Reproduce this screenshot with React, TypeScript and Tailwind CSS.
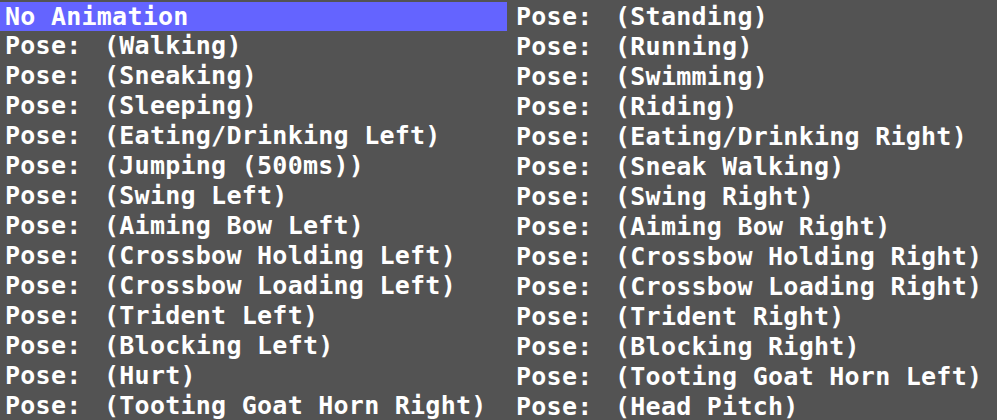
const leftPoses = [
  'Walking',
  'Sneaking',
  'Sleeping',
  'Eating/Drinking Left',
  'Jumping (500ms)',
  'Swing Left',
  'Aiming Bow Left',
  'Crossbow Holding Left',
  'Crossbow Loading Left',
  'Trident Left',
  'Blocking Left',
  'Hurt',
  'Tooting Goat Horn Right',
];

const rightPoses = [
  'Standing',
  'Running',
  'Swimming',
  'Riding',
  'Eating/Drinking Right',
  'Sneak Walking',
  'Swing Right',
  'Aiming Bow Right',
  'Crossbow Holding Right',
  'Crossbow Loading Right',
  'Trident Right',
  'Blocking Right',
  'Tooting Goat Horn Left',
  'Head Pitch',
];

const PoseRow = ({ name }: { name: string }) => (
  <div className="flex h-[30px] items-start pl-[5px] leading-[30px] whitespace-nowrap">
    <span className="w-[99px] shrink-0">Pose:</span>
    <span>({name})</span>
  </div>
);

export default function App() {
  return (
    <div
      className="flex h-[420px] w-[997px] overflow-hidden bg-[#535353] pt-[2px] text-[25px] font-bold tracking-[0.25px] text-white"
      style={{ fontFamily: '"DejaVu Sans Mono", monospace' }}
    >
      <div className="flex w-[511px] shrink-0 flex-col">
        <div className="h-[30px]">
          <div className="h-[29px] w-[507px] bg-[#6464ff] pl-[5px] leading-[30px] whitespace-nowrap">
            No Animation
          </div>
        </div>
        {leftPoses.map((p) => (
          <PoseRow key={p} name={p} />
        ))}
      </div>
      <div className="flex flex-1 flex-col">
        {rightPoses.map((p) => (
          <PoseRow key={p} name={p} />
        ))}
      </div>
    </div>
  );
}
